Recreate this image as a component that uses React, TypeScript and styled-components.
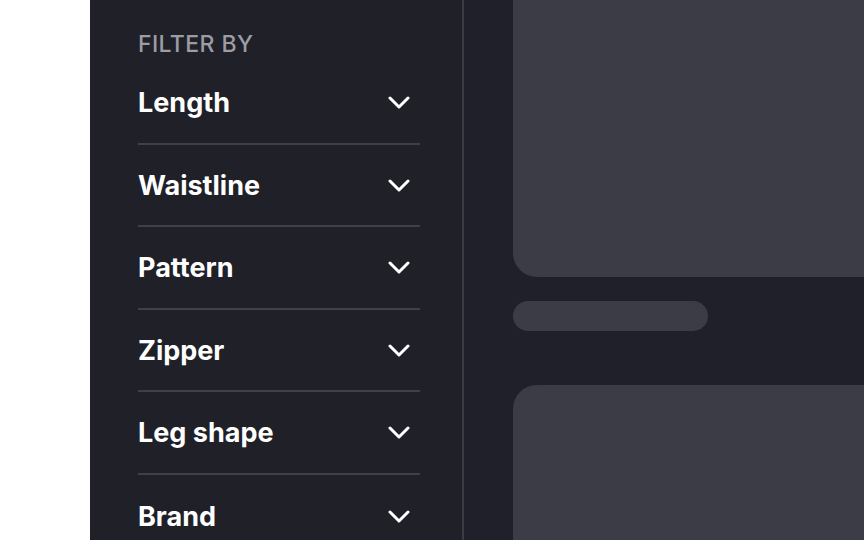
import React from "react";
import styled, { createGlobalStyle } from "styled-components";

const Global = createGlobalStyle`
  html, body { margin: 0; padding: 0; background: #ffffff; overflow: hidden; }
  body { font-family: Inter, "Noto Sans", sans-serif; }
`;

const Page = styled.div`
  display: flex;
  width: 864px;
  height: 540px;
  overflow: hidden;
  background: #ffffff;
`;

const Gutter = styled.div`
  width: 90px;
  flex: none;
`;

const Sidebar = styled.aside`
  width: 374px;
  flex: none;
  box-sizing: border-box;
  background: #202029;
  border-right: 2px solid #3c3c46;
  padding: 30px 42px 0 48px;
  display: flex;
  flex-direction: column;
  overflow: hidden;
`;

const Heading = styled.div`
  flex: none;
  color: #9c9ca5;
  font-size: 23px;
  font-weight: 500;
  line-height: 28px;
  letter-spacing: 0.4px;
  text-transform: uppercase;
  margin-bottom: 4px;
`;

const Item = styled.div<{ $last?: boolean }>`
  flex: none;
  height: 82.5px;
  box-sizing: border-box;
  display: flex;
  align-items: center;
  justify-content: space-between;
  border-bottom: ${(p) => (p.$last ? "none" : "2px solid #40404a")};
  padding-top: 1px;
`;

const Title = styled.span`
  color: #ffffff;
  font-size: 27px;
  font-weight: 700;
  letter-spacing: 0;
`;

const Chevron = styled.svg`
  width: 22px;
  height: 13px;
  margin-right: 10px;
  flex: none;
`;

const Main = styled.main`
  flex: 1;
  background: #20202a;
  padding-left: 49px;
  display: flex;
  flex-direction: column;
  overflow: hidden;
`;

const Card = styled.div<{ $top?: number }>`
  width: 420px;
  height: 320px;
  flex: none;
  margin-top: ${(p) => p.$top ?? 0}px;
  background: #3c3c46;
  border-radius: 24px;
`;

const Pill = styled.div`
  width: 195px;
  height: 30px;
  flex: none;
  margin: 24px 0 54px;
  background: #3c3c46;
  border-radius: 15px;
`;

const filters = ["Length", "Waistline", "Pattern", "Zipper", "Leg shape", "Brand"];

const ChevronIcon = () => (
  <Chevron viewBox="0 0 22 13" fill="none">
    <polyline
      points="2,2 11,11 20,2"
      stroke="#ffffff"
      strokeWidth="3"
      strokeLinecap="round"
      strokeLinejoin="round"
    />
  </Chevron>
);

export default function App() {
  return (
    <>
      <Global />
      <Page>
        <Gutter />
        <Sidebar>
          <Heading>Filter by</Heading>
          {filters.map((f, i) => (
            <Item key={f} $last={i === filters.length - 1}>
              <Title>{f}</Title>
              <ChevronIcon />
            </Item>
          ))}
        </Sidebar>
        <Main>
          <Card $top={-43} />
          <Pill />
          <Card />
        </Main>
      </Page>
    </>
  );
}
